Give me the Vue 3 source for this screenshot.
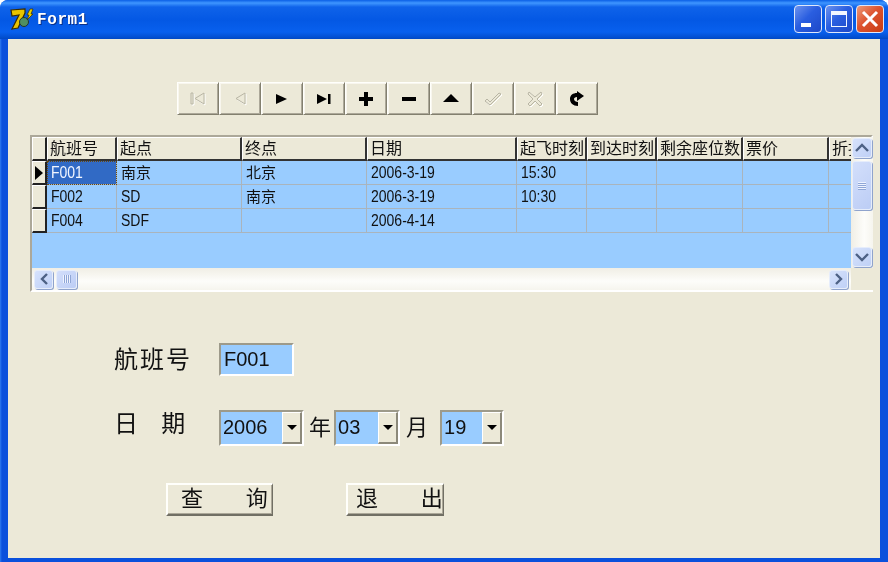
<template>
  <div class="window">
    <div class="titlebar">
      <svg class="app-icon" width="26" height="26" viewBox="0 0 26 26">
        <path d="M3 4 L17 3 L17 7 L10 22 L4 23 L11 9 L4 10 Z" fill="#e8c400" stroke="#3a2c00" stroke-width="1.2" />
        <circle cx="16" cy="16" r="4.5" fill="#4f8f62" stroke="#24352c" />
        <path d="M22 3 L25 3 L23 8 L25 8 L19 14 L21 9 L19 9 Z" fill="#e8d000" stroke="#3a2c00" stroke-width="0.7" />
      </svg>
      <span class="title">Form1</span>
      <div class="win-buttons">
        <div class="win-btn">
          <span class="min-mark"></span>
        </div>
        <div class="win-btn">
          <span class="max-mark"></span>
        </div>
        <div class="win-btn close">
          <svg width="18" height="18" viewBox="0 0 18 18">
            <path d="M2 2 L16 16 M16 2 L2 16" stroke="#fff" stroke-width="3" />
          </svg>
        </div>
      </div>
    </div>

    <div class="client">
      <div class="toolbar">
        <div class="nav-btn" v-for="b in navButtons" :key="b.name">
          <svg width="20" height="20" viewBox="0 0 20 20">
            <g v-if="b.off" transform="translate(1 1)" class="off-shadow">
              <path :d="b.d" />
            </g>
            <g :class="b.off ? 'off-icon' : 'on-icon'">
              <path :d="b.d" />
            </g>
          </svg>
        </div>
      </div>

      <div class="grid">
        <div class="grid-main">
          <div class="grid-scroll">
            <div class="grid-row head">
              <div class="ind"></div>
              <div
                class="hcell"
                v-for="(c, i) in columns"
                :key="c"
                :style="{ width: widths[i] + 'px' }"
              >{{ c }}</div>
            </div>
            <div class="grid-row" v-for="(row, r) in rows" :key="r">
              <div class="ind">
                <span v-if="r === 0" class="pointer"></span>
              </div>
              <div
                v-for="(c, i) in columns"
                :key="c"
                class="cell"
                :class="{ current: r === 0 && i === 0 }"
                :style="{ width: widths[i] + 'px' }"
              ><span :class="isCjk(row[i]) ? 'cjk' : 'latin'">{{ row[i] }}</span></div>
            </div>
          </div>
          <div class="hscroll">
            <div class="sb-btn h">
              <svg width="10" height="12" viewBox="0 0 10 12"><path d="M8 1 L3 6 L8 11" class="chev" /></svg>
            </div>
            <div class="sb-thumb h">
              <span class="grip v"></span>
            </div>
            <div class="sb-space"></div>
            <div class="sb-btn h">
              <svg width="10" height="12" viewBox="0 0 10 12"><path d="M2 1 L7 6 L2 11" class="chev" /></svg>
            </div>
          </div>
        </div>
        <div class="vscroll">
          <div class="vtrack">
            <div class="sb-btn v">
              <svg width="14" height="10" viewBox="0 0 14 10"><path d="M1 8 L7 2 L13 8" class="chev" /></svg>
            </div>
            <div class="sb-thumb v">
              <span class="grip h"></span>
            </div>
            <div class="sb-space"></div>
            <div class="sb-btn v">
              <svg width="14" height="10" viewBox="0 0 14 10"><path d="M1 2 L7 8 L13 2" class="chev" /></svg>
            </div>
          </div>
          <div class="sb-corner"></div>
        </div>
      </div>

      <div class="form">
        <div class="form-row first">
          <span class="label">航班号</span>
          <div class="edit">F001</div>
        </div>
        <div class="form-row second">
          <span class="label date">{{ dateLabel }}</span>
          <div class="combo year-box">
            <span class="combo-text">2006</span>
            <span class="combo-btn"><i></i></span>
          </div>
          <span class="unit year">年</span>
          <div class="combo month-box">
            <span class="combo-text">03</span>
            <span class="combo-btn"><i></i></span>
          </div>
          <span class="unit month">月</span>
          <div class="combo day-box">
            <span class="combo-text">19</span>
            <span class="combo-btn"><i></i></span>
          </div>
        </div>
        <div class="actions">
          <div class="push query">{{ queryText }}</div>
          <div class="push quit">{{ quitText }}</div>
        </div>
      </div>
    </div>
  </div>
</template>

<script setup>
const navButtons = [
  { name: 'first', off: true, d: 'M3 4 H5 V15 H3 Z M16 4 L7 9.5 L16 15 Z' },
  { name: 'prev', off: true, d: 'M15 4 L6 9.5 L15 15 Z' },
  { name: 'next', d: 'M4 5 L15 10 L4 15 Z' },
  { name: 'last', d: 'M3 5 L13 10 L3 15 Z M14 5 H16.5 V15 H14 Z' },
  { name: 'add', d: 'M8 3 H12 V8 H17 V12 H12 V17 H8 V12 H3 V8 H8 Z' },
  { name: 'remove', d: 'M3 8 H17 V12 H3 Z' },
  { name: 'edit', d: 'M10 5 L18 13 H2 Z' },
  { name: 'post', off: true, d: 'M2 12 L4 10 L7 13 L16 4 L18 5 L7 16 Z' },
  { name: 'cancel', off: true, d: 'M4 3 L10 8 L16 3 L17 5 L12 10 L17 15 L15 17 L10 12 L5 17 L3 15 L8 10 L3 5 Z' },
  { name: 'refresh', d: 'M11 17 C6 17 3 14 3 10 C3 6 6 4 10 4 L10 2 L17 7 L10 12 L10 8 C8 8 7 9 7 10 C7 12 9 13 11 13 Z' }
]

const columns = ['航班号', '起点', '终点', '日期', '起飞时刻', '到达时刻', '剩余座位数', '票价', '折扣']
const widths = [70, 125, 125, 150, 70, 70, 86, 86, 70]

const rows = [
  ['F001', '南京', '北京', '2006-3-19', '15:30', '', '', '', ''],
  ['F002', 'SD', '南京', '2006-3-19', '10:30', '', '', '', ''],
  ['F004', 'SDF', '', '2006-4-14', '', '', '', '', '']
]

// the spaces are part of the captions, so they come from here and not the template
const dateLabel = '日    期'
const queryText = '查       询'
const quitText = '退       出'

const isCjk = (s) => /[^\x00-\x7f]/.test(s)
</script>

<style>
html,
body {
  margin: 0;
  background: #fff;
}
</style>

<style scoped>
.window {
  width: 888px;
  height: 562px;
  box-sizing: border-box;
  display: flex;
  flex-direction: column;
  border-radius: 8px 8px 0 0;
  overflow: hidden;
  padding-bottom: 4px;
  background: linear-gradient(90deg, #2f7cf0 0, #0a50dc 2px, #0a50dc 100%);
  font-family: "Liberation Sans", "Noto Sans CJK SC", sans-serif;
  color: #111;
  filter: blur(0.4px);
}
.titlebar {
  height: 39px;
  flex: none;
  display: flex;
  align-items: center;
  padding: 0 4px 2px 8px;
  box-sizing: border-box;
  background: linear-gradient(180deg, #0a5fe6 0, #3f96ff 3px, #0f63ea 7px, #0458e4 20px, #0860ee 32px, #0350d2 37px, #0048c4 39px);
}
.app-icon {
  flex: none;
  margin-top: 1px;
}
.title {
  margin-left: 3px;
  margin-top: 2px;
  font-family: "Liberation Mono", monospace;
  font-weight: bold;
  font-size: 16px;
  letter-spacing: 0.6px;
  color: #fff;
  text-shadow: 1px 1px 0 #0a2f88;
}
.win-buttons {
  margin-left: auto;
  display: flex;
  gap: 3px;
}
.win-btn {
  width: 28px;
  height: 28px;
  box-sizing: border-box;
  border: 1px solid #dfe8fb;
  border-radius: 4px;
  background: linear-gradient(135deg, #6d93ee 0, #2a5ee0 45%, #1c48c8 100%);
  position: relative;
  display: flex;
  align-items: center;
  justify-content: center;
}
.win-btn.close {
  background: linear-gradient(135deg, #ee9a78 0, #dd5430 45%, #c83c12 100%);
}
.min-mark {
  position: absolute;
  left: 6px;
  bottom: 5px;
  width: 10px;
  height: 4px;
  background: #fff;
}
.max-mark {
  width: 16px;
  height: 16px;
  box-sizing: border-box;
  border: 1px solid #f2f6ff;
  border-top: 4px solid #f2f6ff;
}

.client {
  flex: 1;
  margin: 0 8px;
  background: #ece9d8;
  display: flex;
  flex-direction: column;
}

.toolbar {
  display: flex;
  margin: 43px 0 0 169px;
  height: 33px;
}
.nav-btn {
  width: 42.1px;
  height: 33px;
  box-sizing: border-box;
  background: #ece9d8;
  border-top: 1px solid #fffffb;
  border-left: 1px solid #fffffb;
  border-right: 1px solid #83806f;
  border-bottom: 1px solid #83806f;
  box-shadow: inset 1px 1px 0 #f8f6ee, inset -1px -1px 0 #aca899;
  display: flex;
  align-items: center;
  justify-content: center;
}
.on-icon path {
  fill: #000;
}
.off-icon path {
  fill: #ece9d8;
  stroke: #b8b5a4;
  stroke-width: 1;
}
.off-shadow path {
  fill: none;
  stroke: #fff;
  stroke-width: 1;
}

.grid {
  margin: 20px 0 0 22px;
  width: 843px;
  height: 157px;
  flex: none;
  box-sizing: border-box;
  border-top: 2px solid #aca899;
  border-left: 2px solid #aca899;
  border-right: 2px solid #fff;
  border-bottom: 2px solid #fff;
  display: flex;
}
.grid-main {
  width: 819px;
  flex: none;
  display: flex;
  flex-direction: column;
}
.grid-scroll {
  flex: 1;
  background: #99ccff;
  overflow: hidden;
}
.grid-row {
  display: flex;
  height: 24px;
  width: max-content;
}
.ind {
  width: 15px;
  flex: none;
  box-sizing: border-box;
  background: #ece9d8;
  border-top: 1px solid #fff;
  border-left: 1px solid #fff;
  border-right: 2px solid #222;
  border-bottom: 2px solid #222;
  display: flex;
  align-items: center;
  justify-content: center;
}
.pointer {
  width: 0;
  height: 0;
  border-left: 8px solid #000;
  border-top: 7px solid transparent;
  border-bottom: 7px solid transparent;
}
.hcell {
  flex: none;
  box-sizing: border-box;
  background: #ece9d8;
  border-top: 1px solid #fff;
  border-left: 1px solid #fff;
  border-right: 2px solid #333;
  border-bottom: 2px solid #333;
  padding-left: 2px;
  font-size: 16px;
  line-height: 21px;
  white-space: nowrap;
  overflow: hidden;
}
.cell {
  flex: none;
  box-sizing: border-box;
  border-right: 1px solid #aab4bc;
  border-bottom: 1px solid #aab4bc;
  padding-left: 4px;
  font-size: 15px;
  line-height: 23px;
  white-space: nowrap;
  overflow: hidden;
}
.cell .latin {
  display: inline-block;
  font-size: 16px;
  transform: scaleX(0.875);
  transform-origin: left center;
}
.cell.current {
  background: #316ac5;
  color: #f2f6ff;
  outline: 1px dotted #6b4a10;
  outline-offset: -1px;
}

.hscroll {
  height: 22px;
  flex: none;
  display: flex;
  align-items: center;
  padding: 0 3px 0 2px;
  box-sizing: border-box;
  background: linear-gradient(180deg, #f0eee5 0, #fdfdfa 60%, #f6f5ee 100%);
}
.sb-btn {
  box-sizing: border-box;
  flex: none;
  border: 1px solid #e6edfb;
  border-radius: 3px;
  background: linear-gradient(135deg, #d6e2fc 0, #bfd0f6 100%);
  box-shadow: 1px 1px 0 #8fa3cc;
  display: flex;
  align-items: center;
  justify-content: center;
}
.sb-btn.h {
  width: 19px;
  height: 19px;
}
.sb-btn.v {
  width: 20px;
  height: 20px;
}
.chev {
  fill: none;
  stroke: #4d6185;
  stroke-width: 2.4;
}
.sb-thumb {
  box-sizing: border-box;
  flex: none;
  border: 1px solid #e6edfb;
  border-radius: 3px;
  background: linear-gradient(135deg, #d3dffb 0, #bccdf5 100%);
  box-shadow: 1px 1px 0 #8fa3cc;
  display: flex;
  align-items: center;
  justify-content: center;
}
.sb-thumb.h {
  width: 21px;
  height: 19px;
  margin-left: 3px;
}
.sb-thumb.v {
  width: 20px;
  height: 49px;
  margin-top: 3px;
}
.sb-space {
  flex: 1;
}
.grip.v {
  width: 8px;
  height: 8px;
  background: repeating-linear-gradient(90deg, #eef3ff 0 1px, #8fa6d6 1px 2px);
}
.grip.h {
  width: 8px;
  height: 8px;
  background: repeating-linear-gradient(180deg, #eef3ff 0 1px, #8fa6d6 1px 2px);
}
.vscroll {
  flex: 1;
  display: flex;
  flex-direction: column;
}
.vtrack {
  flex: 1;
  display: flex;
  flex-direction: column;
  padding: 1px;
  background: linear-gradient(90deg, #f0eee5 0, #fdfdfa 60%, #f6f5ee 100%);
}
.sb-corner {
  height: 22px;
  flex: none;
  background: #ece9d8;
}

.form {
  display: flex;
  flex-direction: column;
  padding-left: 106px;
}
.form-row {
  display: flex;
  align-items: center;
}
.form-row.first {
  margin-top: 51px;
}
.form-row.second {
  margin-top: 33px;
}
.label {
  width: 105px;
  flex: none;
  font-size: 24px;
  letter-spacing: 2px;
  white-space: pre;
  line-height: 30px;
}
.label.date {
  letter-spacing: -0.7px;
  margin-top: -7px;
}
.edit {
  width: 75px;
  height: 33px;
  box-sizing: border-box;
  background: #99ccff;
  border-top: 2px solid #9d9a8a;
  border-left: 2px solid #9d9a8a;
  border-right: 2px solid #fff;
  border-bottom: 2px solid #fff;
  padding-left: 3px;
  font-size: 20px;
  line-height: 28px;
}
.combo {
  height: 36px;
  box-sizing: border-box;
  flex: none;
  display: flex;
  background: #99ccff;
  border-top: 2px solid #9d9a8a;
  border-left: 2px solid #9d9a8a;
  border-right: 2px solid #fff;
  border-bottom: 2px solid #fff;
}
.year-box {
  width: 85px;
}
.month-box {
  width: 66px;
  margin-top: 1px;
}
.day-box {
  width: 64px;
}
.combo-text {
  flex: 1;
  padding-left: 2px;
  font-size: 20px;
  line-height: 31px;
}
.combo-btn {
  width: 20px;
  flex: none;
  box-sizing: border-box;
  background: #ece9d8;
  border-top: 1px solid #fff;
  border-left: 1px solid #fff;
  border-right: 2px solid #8c897a;
  border-bottom: 2px solid #8c897a;
  display: flex;
  align-items: center;
  justify-content: center;
}
.combo-btn i {
  width: 0;
  height: 0;
  border-top: 5px solid #000;
  border-left: 5px solid transparent;
  border-right: 5px solid transparent;
}
.unit {
  font-size: 22px;
  line-height: 30px;
}
.unit.year {
  margin: 0 3px 0 5px;
}
.unit.month {
  margin: 0 12px 0 6px;
}
.actions {
  display: flex;
  gap: 73px;
  margin: 37px 0 0 52px;
}
.push {
  height: 33px;
  box-sizing: border-box;
  background: #ece9d8;
  border-top: 2px solid #fffffb;
  border-left: 2px solid #fffffb;
  border-right: 1px solid #716f64;
  border-bottom: 2px solid #716f64;
  box-shadow: inset -1px -1px 0 #aca899;
  font-size: 22px;
  line-height: 28px;
  white-space: pre;
  padding-left: 13px;
  overflow: hidden;
}
.push.query {
  width: 107px;
}
.push.quit {
  width: 98px;
  padding-left: 8px;
}
</style>
